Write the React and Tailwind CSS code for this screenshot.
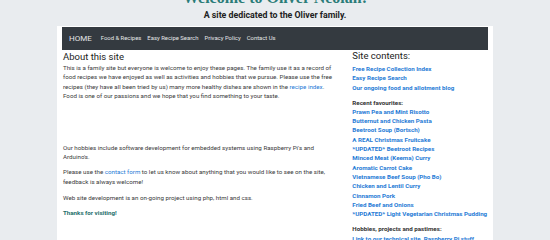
const navLinks = ["Food & Recipes", "Easy Recipe Search", "Privacy Policy", "Contact Us"];

const favourites = [
  "Prawn Pea and Mint Risotto",
  "Butternut and Chicken Pasta",
  "Beetroot Soup (Bortsch)",
  "A REAL Christmas Fruitcake",
  "*UPDATED* Beetroot Recipes",
  "Minced Meat (Keema) Curry",
  "Aromatic Carrot Cake",
  "Vietnamese Beef Soup (Pho Bo)",
  "Chicken and Lentil Curry",
  "Cinnamon Pork",
  "Fried Beef and Onions",
  "*UPDATED* Light Vegetarian Christmas Pudding",
];

const App = () => {
  return (
    <div className="min-h-[240px] bg-[#e9ecef] font-['Roboto','Liberation_Sans',sans-serif] text-[#3a3a3a] overflow-hidden">
      <header className="text-center">
        <h1 className="mt-[-11px] h-[18px] font-['Liberation_Serif',serif] text-[16px] font-bold leading-[18px] text-[#2b7c78]">
          Welcome to Oliver Neolan!
        </h1>
        <p className="mt-[3px] text-[8.8px] font-bold leading-[10px] text-[#222]">
          A site dedicated to the Oliver family.
        </p>
      </header>

      <div className="mx-auto mt-[6px] w-[436px] bg-white px-[5px] pt-[1px] pb-[10px]">
        <nav className="flex h-[23px] items-center bg-[#343a40] px-[7px] text-[#e4e6e8]">
          <span className="mr-[9px] text-[8px]">HOME</span>
          <div className="flex gap-[6px] text-[5.9px]">
            {navLinks.map((link) => (
              <span key={link}>{link}</span>
            ))}
          </div>
        </nav>

        <div className="flex pl-[1px]">
          <main className="w-[272px]">
            <h2 className="mt-[1px] text-[9.5px] leading-[12px] text-[#222]">About this site</h2>
            <div className="mt-[1px] text-[6.2px] leading-[9.3px]">
              <p>
                This is a family site but everyone is welcome to enjoy these pages. The family use it as a record of
                food recipes we have enjoyed as well as activities and hobbies that we pursue. Please use the free
                recipes (they have all been tried by us) many more healthy dishes are shown in the{" "}
                <a className="text-[#1f7bd6]">recipe index</a>. Food is one of our passions and we hope that you find
                something to your taste.
              </p>
              <div className="h-[37px]" />
              <p className="mt-[6px]">
                Our hobbies include software development for embedded systems using Raspberry Pi's and Arduino's.
              </p>
              <p className="mt-[5.7px]">
                Please use the <a className="text-[#1f7bd6]">contact form</a> to let us know about anything that you
                would like to see on the site, feedback is always welcome!
              </p>
              <p className="mt-[6.5px]">Web site development is an on-going project using php, html and css.</p>
              <p className="mt-[5.7px] font-bold text-[#1d6e6a]">Thanks for visiting!</p>
            </div>
          </main>

          <aside className="ml-[18px] w-[136px]">
            <h2 className="mt-[0px] text-[9.5px] leading-[12px] text-[#222]">Site contents:</h2>
            <div className="mt-[3px] text-[6.2px] font-bold leading-[9.3px] text-[#1f7bd6]">
              <div>Free Recipe Collection Index</div>
              <div>Easy Recipe Search</div>
              <div>Our ongoing food and allotment blog</div>
            </div>
            <div className="mt-[5.7px] text-[6.2px] font-bold leading-[9.3px] text-[#333]">Recent favourites:</div>
            <ul className="text-[6.2px] font-bold leading-[9.3px] text-[#1f7bd6]">
              {favourites.map((item) => (
                <li key={item} className="whitespace-nowrap">{item}</li>
              ))}
            </ul>
            <div className="mt-[6px] text-[6.2px] font-bold leading-[9.3px] text-[#333]">
              Hobbies, projects and pastimes:
            </div>
            <div className="text-[6.2px] font-bold leading-[9.3px] text-[#1f7bd6]">
              Link to our technical site, Raspberry Pi stuff
            </div>
          </aside>
        </div>
      </div>
    </div>
  );
};

export default App;
